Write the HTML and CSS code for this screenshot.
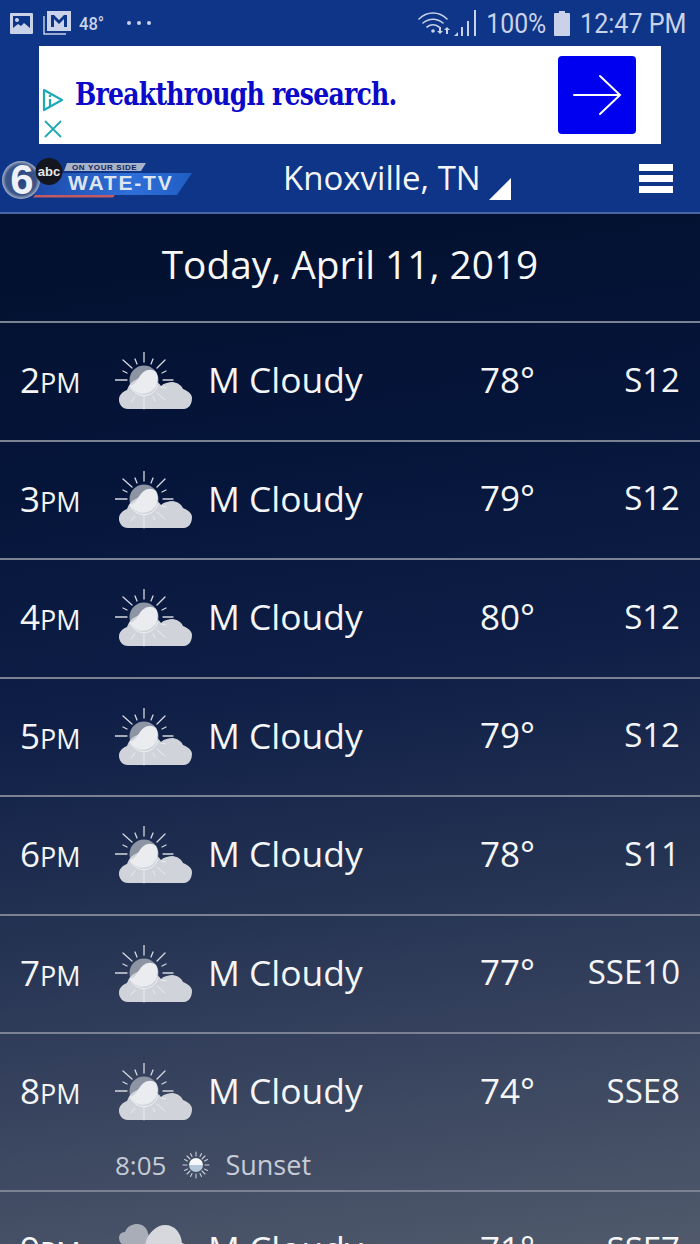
FILE: index.html
```html
<!DOCTYPE html>
<html lang="en">
<head>
  <meta charset="UTF-8" />
  <meta name="viewport" content="width=device-width,initial-scale=1.0" />
  <title>WATE 6 Weather</title>
  <link rel="stylesheet" href="styles.css">
</head>
<body>
  <svg class="defs" width="0" height="0">
    <symbol id="mcloudy" viewBox="0 0 78 58">
      <g stroke="#d5d8df" stroke-width="1.300" stroke-linecap="round">
        <path d="M29 0v10M8 8l9 8M50 8l-8 8M20 7l2 5M38 7l-2 5M8 19l4 2M51 19l-4 2M0 28h12M48 28h10"/>
      </g>
      <circle cx="29" cy="28" r="14.500" fill="#8d95a5"/>
      <path d="M13 57C7 57 4 52 4 48c0-5 3-8 8-10 3-9 10-12 17-12s14 3 17 8c3-3 8-4 12-4 5 1 8 3 10 7 5 2 9 5 9 9 0 7-4 11-8 11z" fill="#d0d3da"/>
      <path d="M15 34C20 33 22 28 25 24 28 19 35 15 41 20A14.500 14.500 0 0 1 15 34z" fill="#ebecef"/>
      <path d="M15 33A14.500 14.500 0 0 0 43 33" fill="none" stroke="#eef0f2" stroke-width="1"/>
      <g stroke="#eceef1" stroke-width=".900" stroke-linecap="round">
        <path d="M29 44v13M20 45l-4 5M38 45l2 4M42 41l8 7M46 35l5 1"/>
      </g>
    </symbol>
    <symbol id="cloudy" viewBox="0 0 78 58">
      <path d="M8 24C2 20 3 11 10 11 12 5 18 3 22 3 28 3 32 7 33 12L37 24z" fill="#a9adb8"/>
      <path d="M12 56C4 54 6 40 16 36 20 26 26 24 30 24 32 12 42 4 50 4 60 4 66 12 67 22 74 24 78 30 78 38 78 50 72 56 66 56z" fill="#d6d8de"/>
    </symbol>
  </svg>

  <div class="top">
    <div class="status">
      <div class="status-left">
        <svg class="ico-pic" viewBox="0 0 23 21"><path fill="#c9d2e8" fill-rule="evenodd" d="M1 0h21a1 1 0 0 1 1 1v19a1 1 0 0 1-1 1H1a1 1 0 0 1-1-1V1a1 1 0 0 1 1-1zM3 3v12l5-4 3 2 3-3 6 5V3zM7 5a2 2 0 1 1-.01 0z"/></svg>
        <svg class="ico-mail" viewBox="0 0 28 24"><path fill="none" stroke="#c9d2e8" stroke-width="1.400" d="M1 5v18h22"/><path fill="#c9d2e8" fill-rule="evenodd" d="M4 0h24v20H4zM8 4v12h3V8l5 5 5-5v8h3V4h-3l-5 5-5-5z"/></svg>
        <span class="temp">48°</span>
        <span class="dots"><i></i><i></i><i></i></span>
      </div>
      <div class="status-right">
        <svg class="ico-wifi" viewBox="0 0 33 24"><g fill="none" stroke="#c9d2e8" stroke-width="1.600" stroke-linecap="round"><path d="M1 8c8-8 20-8 28 0M5 12c6-5 14-5 20 0M9 16c4-3 8-3 12 0"/></g><circle cx="15" cy="20" r="1.800" fill="#c9d2e8"/><path fill="#c9d2e8" d="M21 16h2v4h2l-3 3-3-3h2zM29 16l3 3h-2v4h-2v-4h-2z"/></svg>
        <svg class="ico-signal" viewBox="0 0 23 26"><path fill="#c9d2e8" d="M0 26l4-4v4zM7 26v-9h2v9zM13 26V11h2v15zM20 26V0h2v26z"/></svg>
        <span class="batt-text">100%</span>
        <svg class="ico-batt" viewBox="0 0 16 25"><path fill="#c9d2e8" d="M5 0h6v2h4a1 1 0 0 1 1 1v21a1 1 0 0 1-1 1H1a1 1 0 0 1-1-1V3a1 1 0 0 1 1-1h4z"/></svg>
        <span class="clock">12:47 PM</span>
      </div>
    </div>

    <div class="ad">
      <div class="ad-marks">
        <svg class="ad-info" viewBox="0 0 22 24"><path fill="none" stroke="#1fa9b5" stroke-width="2.200" stroke-linejoin="round" d="M2 2l18 10L2 22z"/><path stroke="#1fa9b5" stroke-width="2.200" d="M8 11v7M8 7v2"/></svg>
        <svg class="ad-close" viewBox="0 0 18 18"><path stroke="#1fa9b5" stroke-width="1.800" d="M1 1l16 16M17 1L1 17"/></svg>
      </div>
      <span class="ad-text">Breakthrough research.</span>
      <div class="ad-btn">
        <svg viewBox="0 0 50 42" width="50" height="42"><path fill="none" stroke="#fff" stroke-width="2" stroke-linecap="round" d="M2 21h46M28 2l20 19-20 19"/></svg>
      </div>
    </div>

    <div class="nav">
      <svg class="logo" viewBox="0 0 192 46">
        <defs>
          <linearGradient id="bannerFill" x1="0" y1="0" x2="1" y2="0">
            <stop offset="0" stop-color="#1c49a8"/>
            <stop offset=".6" stop-color="#2f6fd8"/>
            <stop offset="1" stop-color="#1f5fc4"/>
          </linearGradient>
          <radialGradient id="discFill">
            <stop offset="0" stop-color="#24437f"/>
            <stop offset=".8" stop-color="#3d5689"/>
            <stop offset="1" stop-color="#a3afc6"/>
          </radialGradient>
        </defs>
        <path fill="url(#bannerFill)" d="M40 16h151l-15 22H34z"/>
        <path fill="#a8b2c8" d="M66 6h79l-5 8H63z"/>
        <path fill="#c25a64" d="M34 38h80l-2 2.500H32z"/>
        <circle cx="20" cy="23" r="19" fill="url(#discFill)"/>
        <text class="logo-six" x="21" y="37" text-anchor="middle">6</text>
        <circle cx="48" cy="14.500" r="13.500" fill="#14161f"/>
        <text class="logo-abc" x="48" y="19" text-anchor="middle">abc</text>
        <text class="logo-side" x="71" y="12.500">ON YOUR SIDE</text>
        <text class="logo-name" x="67" y="33">WATE-TV</text>
      </svg>
      <span class="city">Knoxville, TN</span>
      <span class="caret"></span>
      <div class="burger"><i></i><i></i><i></i></div>
    </div>
  </div>

  <div class="main">
    <div class="date">Today, April 11, 2019</div>

    <div class="row">
      <div class="row-main">
        <div class="hour">2<small>PM</small></div>
        <svg class="wx"><use href="#mcloudy"/></svg>
        <div class="cond">M Cloudy</div>
        <div class="deg">78°</div>
        <div class="wind">S12</div>
      </div>
    </div>
    <div class="row">
      <div class="row-main">
        <div class="hour">3<small>PM</small></div>
        <svg class="wx"><use href="#mcloudy"/></svg>
        <div class="cond">M Cloudy</div>
        <div class="deg">79°</div>
        <div class="wind">S12</div>
      </div>
    </div>
    <div class="row">
      <div class="row-main">
        <div class="hour">4<small>PM</small></div>
        <svg class="wx"><use href="#mcloudy"/></svg>
        <div class="cond">M Cloudy</div>
        <div class="deg">80°</div>
        <div class="wind">S12</div>
      </div>
    </div>
    <div class="row">
      <div class="row-main">
        <div class="hour">5<small>PM</small></div>
        <svg class="wx"><use href="#mcloudy"/></svg>
        <div class="cond">M Cloudy</div>
        <div class="deg">79°</div>
        <div class="wind">S12</div>
      </div>
    </div>
    <div class="row">
      <div class="row-main">
        <div class="hour">6<small>PM</small></div>
        <svg class="wx"><use href="#mcloudy"/></svg>
        <div class="cond">M Cloudy</div>
        <div class="deg">78°</div>
        <div class="wind">S11</div>
      </div>
    </div>
    <div class="row">
      <div class="row-main">
        <div class="hour">7<small>PM</small></div>
        <svg class="wx"><use href="#mcloudy"/></svg>
        <div class="cond">M Cloudy</div>
        <div class="deg">77°</div>
        <div class="wind">SSE10</div>
      </div>
    </div>
    <div class="row row-sun">
      <div class="row-main">
        <div class="hour">8<small>PM</small></div>
        <svg class="wx"><use href="#mcloudy"/></svg>
        <div class="cond">M Cloudy</div>
        <div class="deg">74°</div>
        <div class="wind">SSE8</div>
      </div>
      <div class="sun">
        <span class="sun-time">8:05</span>
        <svg class="sun-ico" viewBox="0 0 28 28">
          <g stroke="#c9ced8" stroke-width="1.100" stroke-linecap="round"><path d="M14 1v4M14 23v4M1 14h4M23 14h4M5 5l3 3M23 5l-3 3M5 23l3-3M23 23l-3-3M8.500 2.500l1.500 3M19.500 2.500l-1.500 3M8.500 25.500l1.500-3M19.500 25.500l-1.500-3M2.500 8.500l3 1.500M25.500 8.500l-3 1.500M2.500 19.500l3-1.500M25.500 19.500l-3-1.500"/></g>
          <path fill="#f6f7f9" d="M7 14a7 7 0 0 1 14 0z"/>
          <path fill="#b4c6da" d="M7 14h14a7 7 0 0 1-14 0z"/>
        </svg>
        <span class="sun-label">Sunset</span>
      </div>
    </div>
    <div class="row">
      <div class="row-main">
        <div class="hour">9<small>PM</small></div>
        <svg class="wx"><use href="#cloudy"/></svg>
        <div class="cond">M Cloudy</div>
        <div class="deg">71°</div>
        <div class="wind">SSE7</div>
      </div>
    </div>
  </div>
</body>
</html>
```

FILE: styles.css
```css
*{box-sizing:border-box;margin:0;padding:0}
html,body{height:100%;overflow:hidden}
body{font-family:"Open Sans",Arial,sans-serif;background:#03112f;color:#f4f5f7;width:700px;height:1244px;display:flex;flex-direction:column}
.defs{position:absolute}

/* top blue area */
.top{background:#0e3587;flex:none;height:214px;border-bottom:2px solid #4a67a5}
.status{height:46px;display:flex;justify-content:space-between;align-items:center;padding:0 13px 0 10px;color:#c9d2e8;font-family:Roboto,Arial,sans-serif}
.status-left,.status-right{display:flex;align-items:center}
.ico-pic{width:23px;height:21px}
.ico-mail{width:28px;height:24px;margin-left:10px}
.temp{font-size:18px;font-weight:500;margin-left:8px;transform:scaleX(.92);transform-origin:left}
.dots{display:flex;gap:6px;margin-left:21px}
.dots i{display:block;width:4px;height:4px;border-radius:50%;background:#c9d2e8}
.ico-wifi{width:33px;height:24px;margin-left:2px}
.ico-signal{width:23px;height:26px;margin-left:3px}
.batt-text{font-size:27px;margin-left:4px;transform:scaleX(.92);transform-origin:right;margin-top:2px}
.ico-batt{width:16px;height:25px;margin-left:8px}
.clock{font-size:27px;margin-left:2px;white-space:nowrap;transform:scaleX(.93);transform-origin:right;margin-top:2px}

.ad{margin:0 39px;height:98px;background:#fff;display:flex;align-items:center;position:relative}
.ad-marks{display:flex;flex-direction:column;align-items:center;gap:8px;margin:36px 0 0 3px;width:22px}
.ad-info{width:22px;height:24px}
.ad-close{width:18px;height:18px}
.ad-text{font-family:"DejaVu Serif",serif;font-weight:700;font-size:32px;letter-spacing:-1px;color:#0a0ac8;margin-left:11px;white-space:nowrap;transform:scaleX(.787);transform-origin:left;margin-top:-3px}
.ad-btn{position:absolute;right:25px;top:10px;width:78px;height:78px;background:#0000f0;border-radius:4px;display:flex;align-items:center;justify-content:center}

.nav{height:68px;position:relative;display:flex;align-items:center}
.logo{position:absolute;left:1px;top:13px;width:192px;height:46px}
.logo-six{font-family:"Liberation Sans",Arial,sans-serif;font-weight:700;font-size:42px;fill:#eef1f7}
.logo-abc{font-family:"Liberation Sans",Arial,sans-serif;font-weight:700;font-size:13px;fill:#e8e8e8}
.logo-side{font-family:"Liberation Sans",Arial,sans-serif;font-weight:700;font-size:8px;letter-spacing:.6px;fill:#10265c}
.logo-name{font-family:"Liberation Sans",Arial,sans-serif;font-weight:700;font-size:21px;fill:#dfe5f0;letter-spacing:1.800px}
.city{font-size:33px;color:#f4f5f7;margin:-2px 0 0 283px}
.caret{position:absolute;left:489px;top:34px;width:0;height:0;border-style:solid;border-width:0 0 22px 22px;border-color:transparent transparent #fff transparent}
.burger{position:absolute;right:27px;top:20px;width:34px;display:flex;flex-direction:column;gap:4px}
.burger i{display:block;height:7px;background:#fff}

/* list */
.main{flex:1;overflow:hidden;background:linear-gradient(172deg,#03102e 0%,#05153a 25%,#0e1e46 45%,#253353 65%,#3e4962 85%,#505a6c 100%)}
.date{height:107px;display:flex;align-items:center;justify-content:center;font-size:38.800px;padding-bottom:8px;color:#f8f8f8}
.row{border-top:2px solid #7b8293;height:118.500px;flex:none}
.row-sun{height:158px}
.row-main{display:flex;align-items:center;height:116px}
.hour{width:115px;padding-left:20px;font-size:35px;white-space:nowrap;margin-top:-3px}
.hour small{font-size:27px}
.wx{width:78px;height:58px;margin-right:15px;flex:none}
.cond{width:238px;font-size:35.400px;white-space:nowrap;margin-top:-4px}
.deg{width:90px;font-size:35px;margin-left:34px;margin-top:-4px}
.wind{flex:1;text-align:right;padding-right:20px;font-size:33px;margin-top:-4px;margin-left:-100px}
.sun{display:flex;align-items:center;padding-left:115px;color:#c6cbd6;margin-top:-4px}
.sun-time{font-size:26px}
.sun-ico{width:28px;height:28px;margin-left:16px}
.sun-label{font-size:27px;margin-left:15px}
```
